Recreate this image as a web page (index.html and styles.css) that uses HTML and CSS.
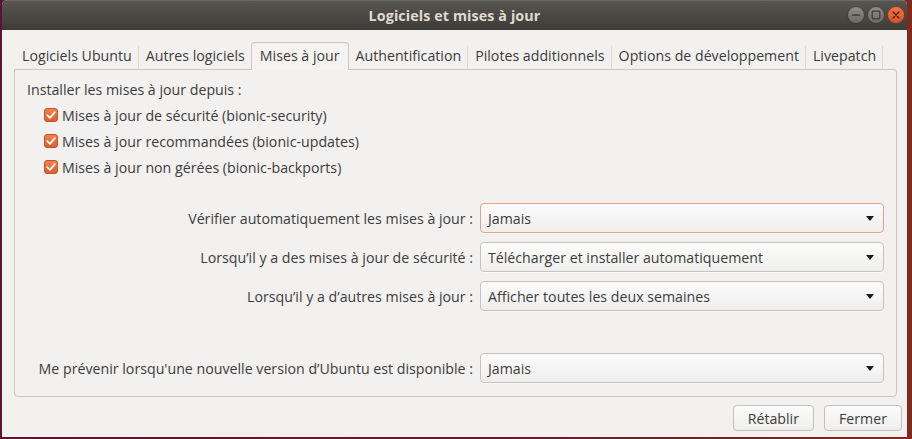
FILE: index.html
```html
<!DOCTYPE html>
<html lang="fr">
<head>
<meta charset="utf-8">
<title>Logiciels et mises à jour</title>
<link rel="stylesheet" href="styles.css">
</head>
<body>
<div class="window">
  <div class="titlebar">
    <span></span>
    <span class="title">Logiciels et mises à jour</span>
    <div class="wbtns">
      <span class="wbtn">
        <svg width="18" height="18" viewBox="0 0 18 18"><circle cx="9" cy="9" r="8.5" fill="url(#g1)" stroke="#3a3935" stroke-width="0.8"/><rect x="5" y="8.4" width="8" height="1.4" fill="#3b3a36"/><defs><linearGradient id="g1" x1="0" y1="0" x2="0" y2="1"><stop offset="0" stop-color="#8e8d87"/><stop offset="1" stop-color="#6a6964"/></linearGradient></defs></svg>
      </span>
      <span class="wbtn">
        <svg width="18" height="18" viewBox="0 0 18 18"><circle cx="9" cy="9" r="8.5" fill="url(#g1)" stroke="#3a3935" stroke-width="0.8"/><rect x="5.2" y="5.2" width="7.6" height="7.6" rx="1" fill="none" stroke="#3b3a36" stroke-width="1.3"/></svg>
      </span>
      <span class="wbtn">
        <svg width="18" height="18" viewBox="0 0 18 18"><defs><linearGradient id="g2" x1="0" y1="0" x2="0" y2="1"><stop offset="0" stop-color="#f3774a"/><stop offset="1" stop-color="#df4b1d"/></linearGradient></defs><circle cx="9" cy="9" r="8.5" fill="url(#g2)" stroke="#3a3935" stroke-width="0.6"/><path d="M6 6 L12 12 M12 6 L6 12" stroke="#3b2a22" stroke-width="1.4" stroke-linecap="round"/></svg>
      </span>
    </div>
  </div>
  <div class="content">
    <div class="tabs">
      <div class="tab">Logiciels Ubuntu</div>
      <div class="tab">Autres logiciels</div>
      <div class="tab active">Mises à jour</div>
      <div class="tab">Authentification</div>
      <div class="tab">Pilotes additionnels</div>
      <div class="tab">Options de développement</div>
      <div class="tab last">Livepatch</div>
    </div>
    <div class="panel">
      <div class="sources">
        <div class="line">Installer les mises à jour depuis :</div>
        <div class="check"><span class="box"><svg width="14" height="14" viewBox="0 0 14 14"><path d="M3.2 7.2 L6 9.8 L10.8 4.2" fill="none" stroke="#fff" stroke-width="1.8" stroke-linecap="round" stroke-linejoin="round"/></svg></span>Mises à jour de sécurité (bionic-security)</div>
        <div class="check"><span class="box"><svg width="14" height="14" viewBox="0 0 14 14"><path d="M3.2 7.2 L6 9.8 L10.8 4.2" fill="none" stroke="#fff" stroke-width="1.8" stroke-linecap="round" stroke-linejoin="round"/></svg></span>Mises à jour recommandées (bionic-updates)</div>
        <div class="check"><span class="box"><svg width="14" height="14" viewBox="0 0 14 14"><path d="M3.2 7.2 L6 9.8 L10.8 4.2" fill="none" stroke="#fff" stroke-width="1.8" stroke-linecap="round" stroke-linejoin="round"/></svg></span>Mises à jour non gérées (bionic-backports)</div>
      </div>
      <div class="form">
        <div class="lbl">Vérifier automatiquement les mises à jour :</div>
        <div class="combo focus"><span>Jamais</span><i class="arrow"></i></div>
        <div class="lbl">Lorsqu’il y a des mises à jour de sécurité :</div>
        <div class="combo"><span>Télécharger et installer automatiquement</span><i class="arrow"></i></div>
        <div class="lbl">Lorsqu’il y a d’autres mises à jour :</div>
        <div class="combo"><span>Afficher toutes les deux semaines</span><i class="arrow"></i></div>
        <div class="spacer"></div>
        <div class="lbl">Me prévenir lorsqu'une nouvelle version d’Ubuntu est disponible :</div>
        <div class="combo"><span>Jamais</span><i class="arrow"></i></div>
      </div>
    </div>
    <div class="actions">
      <button class="btn">Rétablir</button>
      <button class="btn">Fermer</button>
    </div>
  </div>
</div>
</body>
</html>
```
FILE: styles.css
```css
* { box-sizing: border-box; }
html, body { margin: 0; padding: 0; }
body {
  width: 912px;
  height: 439px;
  overflow: hidden;
  background: linear-gradient(90deg, #5a1530 0%, #6a1c2c 60%, #7e2a1c 100%);
  font-family: "Open Sans", "Noto Sans", sans-serif;
  font-size: 14.2px;
  color: #3c3c3c;
}
.window {
  margin-left: 2px;
  width: 905px;
  height: 437px;
  background: #f2f1f0;
  border-radius: 5px 5px 0 0;
  display: flex;
  flex-direction: column;
  overflow: hidden;
}
.titlebar {
  height: 30px;
  flex: none;
  display: grid;
  grid-template-columns: 1fr auto 1fr;
  align-items: center;
  background: linear-gradient(#57564f, #3d3c38);
  box-shadow: inset 0 1px 0 rgba(255,255,255,0.12);
}
.title {
  font-weight: 700;
  font-size: 14.3px;
  color: #dfdbd2;
  letter-spacing: 0.1px;
}
.wbtns {
  justify-self: end;
  display: flex;
  gap: 2px;
  padding-right: 2px;
}
.wbtn { display: flex; width: 18px; height: 18px; }
.content {
  flex: 1;
  padding: 12px 10px 0 12px;
  display: flex;
  flex-direction: column;
}
.tabs {
  display: flex;
  height: 27px;
  padding-left: 1px;
}
.tab {
  line-height: 27px;
  padding: 0 7px;
  position: relative;
  white-space: nowrap;
}
.tab::after {
  content: "";
  position: absolute;
  right: 0;
  top: 4px;
  bottom: 0;
  width: 1px;
  background: #dcd9d4;
}
.tab.active {
  border: 1px solid #cac6c1;
  border-bottom: none;
  border-radius: 4px 4px 0 0;
  background: #f4f3f2;
  line-height: 26px;
  margin-left: -1px;
  padding: 0 8px;
  z-index: 1;
  height: 28px;
}
.tab.active::after { display: none; }
.panel {
  border: 1px solid #cac6c1;
  border-radius: 0 3px 4px 4px;
  padding: 6px 12px 13px 12px;
  background: #f2f1f0;
}
.sources .line {
  height: 26px;
  display: flex;
  align-items: center;
}
.check {
  height: 26px;
  display: flex;
  align-items: center;
  padding-left: 17px;
}
.box {
  width: 14px;
  height: 14px;
  border-radius: 3px;
  background: linear-gradient(#f0824d, #dd5f2a);
  border: 1px solid #c2532a;
  margin-right: 4px;
  display: flex;
  align-items: center;
  justify-content: center;
}
.box svg { flex: none; }
.form {
  margin-top: 23px;
  display: grid;
  grid-template-columns: 1fr 404px;
  column-gap: 7px;
  row-gap: 9px;
}
.lbl {
  text-align: right;
  align-self: center;
  white-space: nowrap;
}
.spacer { grid-column: 1 / -1; height: 24px; }
.combo {
  height: 30px;
  border: 1px solid #c7c2bd;
  border-radius: 4px;
  background: linear-gradient(#fcfcfc, #efeeed);
  display: flex;
  align-items: center;
  justify-content: space-between;
  padding: 0 9px 0 7px;
  box-shadow: 0 1px 0 rgba(255,255,255,0.6);
}
.combo.focus { border-color: #e9a283; }
.arrow {
  width: 0;
  height: 0;
  border-left: 4.5px solid transparent;
  border-right: 4.5px solid transparent;
  border-top: 5px solid #1a1a1a;
}
.actions {
  display: flex;
  justify-content: flex-end;
  gap: 10px;
  margin-top: 8px;
  margin-right: -5px;
}
.btn {
  height: 26px;
  padding: 0 14px;
  font: inherit;
  color: #3c3c3c;
  border: 1px solid #c4bfba;
  border-radius: 4px;
  background: linear-gradient(#fbfbfb, #efeeed);
}
```
